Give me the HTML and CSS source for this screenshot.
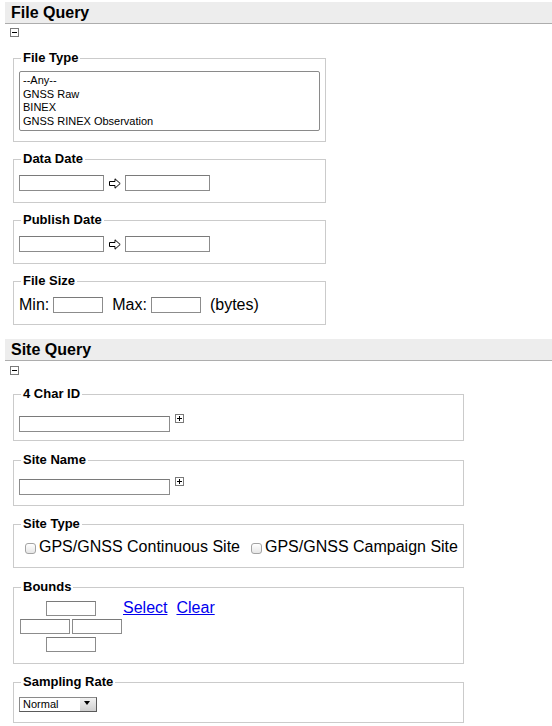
FILE: index.html
```html
<!DOCTYPE html>
<html>
<head>
<meta charset="utf-8">
<title>Query</title>
<link rel="stylesheet" href="styles.css">
</head>
<body>
<h2 class="section-header">File Query</h2>
<div class="toggle toggle-file"><svg width="9" height="9" viewBox="0 0 9 9"><rect x="0.5" y="0.5" width="8" height="8" fill="#fff" stroke="#7a7a7a"/><path d="M2 4.5H7" stroke="#000"/></svg></div>

<fieldset class="group file file-type">
  <legend>File Type</legend>
  <select class="listbox" multiple size="4">
    <option>--Any--</option>
    <option>GNSS Raw</option>
    <option>BINEX</option>
    <option>GNSS RINEX Observation</option>
  </select>
</fieldset>

<fieldset class="group file date-group">
  <legend>Data Date</legend>
  <div class="date-row">
    <input class="date" type="text">
    <svg class="arrow" width="12" height="11" viewBox="0 0 12 11"><path d="M0.5 3.5H6V0.8L11.2 5.5L6 10.2V7.5H0.5Z" fill="#fff" stroke="#000"/></svg>
    <input class="date" type="text">
  </div>
</fieldset>

<fieldset class="group file date-group">
  <legend>Publish Date</legend>
  <div class="date-row">
    <input class="date" type="text">
    <svg class="arrow" width="12" height="11" viewBox="0 0 12 11"><path d="M0.5 3.5H6V0.8L11.2 5.5L6 10.2V7.5H0.5Z" fill="#fff" stroke="#000"/></svg>
    <input class="date" type="text">
  </div>
</fieldset>

<fieldset class="group file size-group">
  <legend>File Size</legend>
  <div class="size-row">
    <span>Min:</span>
    <input class="num" type="text">
    <span class="after-input">Max:</span>
    <input class="num" type="text">
    <span class="after-input">(bytes)</span>
  </div>
</fieldset>

<h2 class="section-header site-header">Site Query</h2>
<div class="toggle toggle-site"><svg width="9" height="9" viewBox="0 0 9 9"><rect x="0.5" y="0.5" width="8" height="8" fill="#fff" stroke="#7a7a7a"/><path d="M2 4.5H7" stroke="#000"/></svg></div>

<fieldset class="group site char-group">
  <legend>4 Char ID</legend>
  <div class="id-row">
    <input class="wide" type="text">
    <svg class="plus" width="9" height="9" viewBox="0 0 9 9"><rect x="0.5" y="0.5" width="8" height="8" fill="#fff" stroke="#7a7a7a"/><path d="M2 4.5H7M4.5 2V7" stroke="#000"/></svg>
  </div>
</fieldset>

<fieldset class="group site name-group">
  <legend>Site Name</legend>
  <div class="id-row">
    <input class="wide" type="text">
    <svg class="plus" width="9" height="9" viewBox="0 0 9 9"><rect x="0.5" y="0.5" width="8" height="8" fill="#fff" stroke="#7a7a7a"/><path d="M2 4.5H7M4.5 2V7" stroke="#000"/></svg>
  </div>
</fieldset>

<fieldset class="group site type-group">
  <legend>Site Type</legend>
  <div class="type-row">
    <label class="check"><input type="checkbox"><span>GPS/GNSS Continuous Site</span></label>
    <label class="check"><input type="checkbox"><span>GPS/GNSS Campaign Site</span></label>
  </div>
</fieldset>

<fieldset class="group site bounds-group">
  <legend>Bounds</legend>
  <div class="bounds">
    <div class="bbox">
      <input class="coord" type="text">
      <div class="bbox-mid">
        <input class="coord" type="text">
        <input class="coord" type="text">
      </div>
      <input class="coord" type="text">
    </div>
    <div class="links">
      <a href="#">Select</a>
      <a href="#">Clear</a>
    </div>
  </div>
</fieldset>

<fieldset class="group site rate-group">
  <legend>Sampling Rate</legend>
  <span class="dropdown">
    <select class="rate">
      <option>Normal</option>
    </select>
  </span>
</fieldset>
</body>
</html>
```
FILE: styles.css
```css
html, body {
  margin: 0;
  padding: 0;
  background: #fff;
  color: #000;
  font-family: "Liberation Sans", Arial, sans-serif;
  font-size: 16px;
}

.section-header {
  box-sizing: border-box;
  margin: 2px 0 0 5px;
  height: 22px;
  padding-left: 6px;
  background: #ededed;
  border-bottom: 1px solid #adadad;
  font-size: 16px;
  font-weight: bold;
  line-height: 22px;
}

.site-header {
  margin-top: 14px;
}

.toggle {
  margin-left: 10px;
  height: 9px;
  line-height: 0;
}

.toggle-file { margin-top: 4px; }
.toggle-site { margin-top: 5px; }

.group {
  box-sizing: border-box;
  margin: 10px 0 0 13px;
  padding: 0 5px;
  border: 1px solid #cbcbcb;
  min-width: 0;
}

.group.file { width: 313px; }
.group.site { width: 451px; }

.group legend {
  margin-left: 2px;
  padding: 0 2px;
  font-size: 13px;
  font-weight: bold;
  line-height: 14px;
}

/* File type */
.file-type {
  margin-top: 14px;
  padding-top: 6px;
  padding-bottom: 10px;
}

.listbox {
  display: block;
  box-sizing: border-box;
  width: 301px;
  height: 60px;
  margin: 0;
  padding: 1px 0 0;
  border: 1px solid #8a8a8a;
  font-family: "Liberation Sans", Arial, sans-serif;
  font-size: 11px;
  color: #000;
  overflow: hidden;
  outline: none;
}

.listbox option {
  padding: 1.4px 3px 0;
  line-height: 13px;
  min-height: 0;
}

/* dates */
.date-group {
  padding-top: 9px;
  padding-bottom: 11px;
}

.date-row {
  display: flex;
  align-items: center;
  height: 16px;
}

input[type="text"] {
  box-sizing: border-box;
  margin: 0;
  padding: 0 2px;
  height: 16px;
  border: 1px solid #8c8c8c;
  border-top-color: #7a7a7a;
  background: #fff;
  font-family: "Liberation Sans", Arial, sans-serif;
  font-size: 11px;
  outline: none;
}

.date { width: 85px; }

.arrow {
  display: block;
  margin: 0 4px 0 5px;
}

/* file size */
.size-group {
  padding-top: 8px;
  padding-bottom: 10px;
}

.size-row {
  display: flex;
  align-items: center;
  height: 18px;
  line-height: 18px;
  font-size: 16px;
}

.num {
  width: 50px;
  margin-left: 4px !important;
}

.after-input { margin-left: 9px; }

/* id rows */
.char-group {
  margin-top: 12px;
  padding-top: 13px;
  padding-bottom: 8px;
}

.name-group {
  margin-top: 12px;
  padding-top: 10px;
  padding-bottom: 10px;
}

.id-row {
  display: flex;
  align-items: flex-start;
}

.wide {
  width: 151px;
  margin-top: 2px !important;
}

.plus {
  display: block;
  margin-left: 5px;
}

/* site type */
.type-group {
  margin-top: 11px;
  padding-top: 7px;
  padding-bottom: 11px;
}

.type-row {
  display: flex;
  gap: 5px;
  line-height: 18px;
  font-size: 16px;
}

.check {
  display: flex;
  align-items: flex-start;
}

.check input {
  -webkit-appearance: none;
  appearance: none;
  box-sizing: border-box;
  width: 11px;
  height: 11px;
  margin: 5px 3px 0 6px;
  border: 1px solid #a3a3a3;
  border-radius: 3px;
  background: linear-gradient(#ffffff, #e6e6e6);
}

/* bounds */
.bounds-group {
  margin-top: 12px;
  padding-top: 7px;
  padding-bottom: 11px;
}

.bounds {
  display: flex;
  align-items: flex-start;
}

.bbox {
  display: flex;
  flex-direction: column;
  align-items: center;
  gap: 3px;
  margin-left: 1px;
}

.bbox-mid {
  display: flex;
  gap: 2px;
}

.coord {
  width: 50px;
  height: 15px !important;
}

.links {
  display: flex;
  gap: 9px;
  margin-left: 1px;
  margin-top: -1px;
  line-height: 16px;
  font-size: 16px;
}

.links a {
  color: #0000ee;
  text-decoration: underline;
}

/* sampling rate */
.rate-group {
  margin-top: 11px;
  padding-top: 8px;
  padding-bottom: 10px;
}

.dropdown {
  position: relative;
  display: block;
  width: 78px;
  height: 15px;
}

.rate {
  -webkit-appearance: none;
  appearance: none;
  display: block;
  box-sizing: border-box;
  width: 78px;
  height: 15px;
  margin: 0;
  padding: 0 0 0 3px;
  border: 1px solid #8a8a8a;
  border-right-color: #5a5a5a;
  border-bottom-color: #5a5a5a;
  background: linear-gradient(#f2f2f2, #cfcfcf) right top / 16px 100% no-repeat, #fff;
  font-family: "Liberation Sans", Arial, sans-serif;
  font-size: 11px;
  line-height: 13px;
  color: #000;
  outline: none;
}

.dropdown::after {
  content: "";
  position: absolute;
  left: 65px;
  top: 4px;
  width: 0;
  height: 0;
  border-left: 3.5px solid transparent;
  border-right: 3.5px solid transparent;
  border-top: 4px solid #000;
  pointer-events: none;
}
```
